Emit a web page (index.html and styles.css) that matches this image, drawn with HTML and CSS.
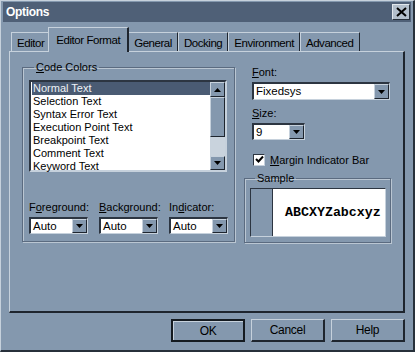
FILE: index.html
```html
<!DOCTYPE html>
<html lang="en">

<head>
    <meta charset="UTF-8">
    <meta name="viewport" content="width=device-width, initial-scale=1.0">
    <title>Options</title>

    <link rel="stylesheet" href="styles.css">

</head>

<body>

    <div class="window">
        <div class="titlebar">
            <span class="title">Options</span>
            <span class="close-btn">
                <svg width="11" height="10" viewBox="0 0 11 10">
                    <path d="M1 1 L10 9 M10 1 L1 9" stroke="#000" stroke-width="2" />
                </svg>
            </span>
        </div>

        <div class="tabs">
            <div class="tab">Editor</div>
            <div class="tab active">Editor Format</div>
            <div class="tab">General</div>
            <div class="tab">Docking</div>
            <div class="tab">Environment</div>
            <div class="tab">Advanced</div>
        </div>

        <div class="panel">
            <fieldset class="group code-colors">
                <legend><u>C</u>ode Colors</legend>

                <div class="listbox">
                    <ul class="items">
                        <li class="selected">Normal Text</li>
                        <li>Selection Text</li>
                        <li>Syntax Error Text</li>
                        <li>Execution Point Text</li>
                        <li>Breakpoint Text</li>
                        <li>Comment Text</li>
                        <li>Keyword Text</li>
                    </ul>
                    <div class="scrollbar">
                        <div class="sb-btn">
                            <svg width="7" height="4" viewBox="0 0 7 4"><path d="M0 4 L3.5 0 L7 4 Z" fill="#000" /></svg>
                        </div>
                        <div class="sb-thumb"></div>
                        <div class="sb-track"></div>
                        <div class="sb-btn sb-down">
                            <svg width="7" height="4" viewBox="0 0 7 4"><path d="M0 0 L3.5 4 L7 0 Z" fill="#000" /></svg>
                        </div>
                    </div>
                </div>

                <div class="color-row">
                    <div class="field">
                        <label>F<u>o</u>reground:</label>
                        <div class="combo">
                            <span class="combo-value">Auto</span>
                            <span class="drop-btn"><svg width="7" height="4" viewBox="0 0 7 4"><path d="M0 0 L3.5 4 L7 0 Z" fill="#000" /></svg></span>
                        </div>
                    </div>
                    <div class="field">
                        <label><u>B</u>ackground:</label>
                        <div class="combo">
                            <span class="combo-value">Auto</span>
                            <span class="drop-btn"><svg width="7" height="4" viewBox="0 0 7 4"><path d="M0 0 L3.5 4 L7 0 Z" fill="#000" /></svg></span>
                        </div>
                    </div>
                    <div class="field">
                        <label>In<u>d</u>icator:</label>
                        <div class="combo">
                            <span class="combo-value">Auto</span>
                            <span class="drop-btn"><svg width="7" height="4" viewBox="0 0 7 4"><path d="M0 0 L3.5 4 L7 0 Z" fill="#000" /></svg></span>
                        </div>
                    </div>
                </div>
            </fieldset>

            <div class="right-col">
                <label class="field-label"><u>F</u>ont:</label>
                <div class="combo font-combo">
                    <span class="combo-value">Fixedsys</span>
                    <span class="drop-btn"><svg width="7" height="4" viewBox="0 0 7 4"><path d="M0 0 L3.5 4 L7 0 Z" fill="#000" /></svg></span>
                </div>

                <label class="field-label size-label"><u>S</u>ize:</label>
                <div class="combo size-combo">
                    <span class="combo-value">9</span>
                    <span class="drop-btn"><svg width="7" height="4" viewBox="0 0 7 4"><path d="M0 0 L3.5 4 L7 0 Z" fill="#000" /></svg></span>
                </div>

                <div class="check-row">
                    <span class="checkbox">
                        <svg width="9" height="9" viewBox="0 0 9 9"><path d="M1 4 L3.5 6.5 L8 1.5" stroke="#000" stroke-width="2" fill="none" /></svg>
                    </span>
                    <span><u>M</u>argin Indicator Bar</span>
                </div>

                <fieldset class="group sample">
                    <legend>Sample</legend>
                    <div class="sample-box">
                        <div class="margin-bar"></div>
                        <div class="sample-text">ABCXYZabcxyz</div>
                    </div>
                </fieldset>
            </div>
        </div>

        <div class="buttons">
            <button class="btn default">OK</button>
            <button class="btn">Cancel</button>
            <button class="btn">Help</button>
        </div>
    </div>

</body>

</html>
```

FILE: styles.css
```css
body {
    margin: 0;
    font-family: "Liberation Sans", Arial, sans-serif;
    font-size: 11px;
    color: #000;
}

.window {
    width: 415px;
    height: 352px;
    box-sizing: border-box;
    background-color: #8498ae;
    border-left: 1px solid #c6d1dc;
    border-top: 1px solid #c6d1dc;
    border-right: 2px solid #27303a;
    border-bottom: 2px solid #27303a;
    padding: 1px 2px 0 2px;
    display: flex;
    flex-direction: column;
}

.titlebar {
    height: 20px;
    background-color: #4f6077;
    display: flex;
    align-items: center;
    justify-content: space-between;
    padding: 0 1px 0 3px;
}

.title {
    color: #fff;
    font-weight: bold;
    font-size: 12px;
    letter-spacing: -0.3px;
}

.close-btn {
    width: 16px;
    height: 14px;
    background-color: #b3bfcc;
    border-top: 1px solid #e2e8ee;
    border-left: 1px solid #e2e8ee;
    border-right: 1px solid #27303a;
    border-bottom: 1px solid #27303a;
    display: flex;
    align-items: center;
    justify-content: center;
}

/* tab strip */
.tabs {
    display: flex;
    align-items: flex-end;
    height: 23px;
    margin-top: 6px;
    padding-left: 8px;
}

.tab {
    height: 18px;
    line-height: 20px;
    padding: 0 5px;
    font-size: 11.5px;
    letter-spacing: -0.45px;
    border-top: 1px solid #c6d1dc;
    border-left: 1px solid #c6d1dc;
    border-right: 1px solid #1e252e;
}

.tab.active {
    height: 24px;
    line-height: 24px;
    margin-bottom: -1px;
    margin-left: -2px;
    margin-right: -1px;
    padding: 0 7px;
    position: relative;
    z-index: 1;
    background-color: #8498ae;
    border-right: 2px solid #1e252e;
}

.panel {
    height: 262px;
    box-sizing: border-box;
    margin: 0 6px;
    border-top: 1px solid #c6d1dc;
    border-left: 1px solid #c6d1dc;
    border-right: 2px solid #1e252e;
    border-bottom: 2px solid #1e252e;
    display: flex;
    padding: 0 12px;
}

/* group boxes */
.group {
    margin: 0;
    border: 1px solid #5b6b80;
    box-shadow: inset 1px 1px 0 #bac6d2, 1px 1px 0 #bac6d2;
}

.group legend {
    margin-left: 5px;
    padding: 0 2px;
    line-height: 13px;
}

.code-colors {
    width: 215px;
    box-sizing: border-box;
    margin-top: 9px;
    align-self: flex-start;
    padding: 0 6px 7px 6px;
}

.listbox {
    margin-top: 6px;
    width: 198px;
    height: 92px;
    box-sizing: border-box;
    background-color: #fff;
    border-top: 2px solid #2c3541;
    border-left: 2px solid #2c3541;
    border-right: 2px solid #c6d1dc;
    border-bottom: 2px solid #c6d1dc;
    display: flex;
}

.items {
    list-style: none;
    margin: 0;
    padding: 0 0 0 1px;
    flex: 1;
}

.items li {
    height: 13px;
    line-height: 13px;
    padding-left: 1px;
    font-size: 11px;
}

.items li.selected {
    background-color: #4a5b73;
    color: #eef2f6;
}

.scrollbar {
    width: 15px;
    display: flex;
    flex-direction: column;
}

.sb-btn,
.sb-thumb,
.drop-btn {
    background-color: #8498ae;
    box-sizing: border-box;
    border-top: 1px solid #c6d1dc;
    border-left: 1px solid #c6d1dc;
    border-right: 1px solid #1e252e;
    border-bottom: 1px solid #1e252e;
}

.sb-btn {
    height: 15px;
    display: flex;
    align-items: center;
    justify-content: center;
}

.sb-down {
    height: 14px;
}

.sb-thumb {
    height: 40px;
}

.sb-track {
    flex: 1;
    background-color: #c9d3dd;
}

.color-row {
    margin-top: 29px;
    display: grid;
    grid-template-columns: 59px 59px 59px;
    column-gap: 11px;
}

.field label,
.field-label {
    display: block;
    height: 13px;
    line-height: 13px;
    white-space: nowrap;
    font-size: 11px;
}

/* combo boxes */
.combo {
    margin-top: 3px;
    height: 17px;
    box-sizing: border-box;
    background-color: #fff;
    border-top: 2px solid #2c3541;
    border-left: 2px solid #2c3541;
    border-right: 1px solid #c6d1dc;
    border-bottom: 1px solid #c6d1dc;
    display: flex;
    align-items: stretch;
}

.combo-value {
    flex: 1;
    padding-left: 2px;
    line-height: 14px;
    font-size: 11.5px;
}

.drop-btn {
    width: 15px;
    display: flex;
    align-items: center;
    justify-content: center;
}

.right-col {
    margin-left: 9px;
    padding-top: 14px;
    display: flex;
    flex-direction: column;
    align-items: flex-start;
}

.right-col .field-label {
    margin-left: 8px;
}

.font-combo {
    margin-left: 8px;
    width: 138px;
    height: 18px;
}

.size-label {
    margin-top: 7px;
}

.size-combo {
    margin-left: 8px;
    width: 53px;
}

.check-row {
    margin-top: 13px;
    margin-left: 9px;
    display: flex;
    align-items: center;
    gap: 5px;
    height: 13px;
    font-size: 11px;
}

.checkbox {
    width: 12px;
    height: 12px;
    box-sizing: border-box;
    background-color: #fff;
    border-top: 1px solid #2c3541;
    border-left: 1px solid #2c3541;
    border-right: 1px solid #c6d1dc;
    border-bottom: 1px solid #c6d1dc;
    display: flex;
    align-items: center;
    justify-content: center;
}

.sample {
    margin-top: 6px;
    width: 147px;
    box-sizing: border-box;
    padding: 0 4px 5px 5px;
}

.sample-box {
    margin-top: 3px;
    height: 49px;
    box-sizing: border-box;
    border-top: 1px solid #2c3541;
    border-left: 1px solid #2c3541;
    border-right: 1px solid #c6d1dc;
    border-bottom: 1px solid #c6d1dc;
    display: flex;
}

.margin-bar {
    width: 21px;
    background-color: #8498ae;
    border-right: 1px solid #2c3541;
}

.sample-text {
    flex: 1;
    background-color: #fff;
    display: flex;
    align-items: center;
    padding-left: 12px;
    font-family: "Liberation Mono", "DejaVu Sans Mono", monospace;
    font-weight: bold;
    font-size: 13.3px;
}

/* dialog buttons */
.buttons {
    margin-top: 6px;
    margin-right: 6px;
    display: flex;
    justify-content: flex-end;
    gap: 6px;
}

.btn {
    width: 74px;
    height: 23px;
    box-sizing: border-box;
    background-color: #8498ae;
    font-family: "Liberation Sans", Arial, sans-serif;
    font-size: 12px;
    letter-spacing: -0.3px;
    color: #000;
    border-top: 1px solid #c6d1dc;
    border-left: 1px solid #c6d1dc;
    border-right: 2px solid #1e252e;
    border-bottom: 2px solid #1e252e;
    padding: 0;
}

.btn.default {
    border: 2px solid #141a20;
    box-shadow: inset 1px 1px 0 #c6d1dc;
}
```
